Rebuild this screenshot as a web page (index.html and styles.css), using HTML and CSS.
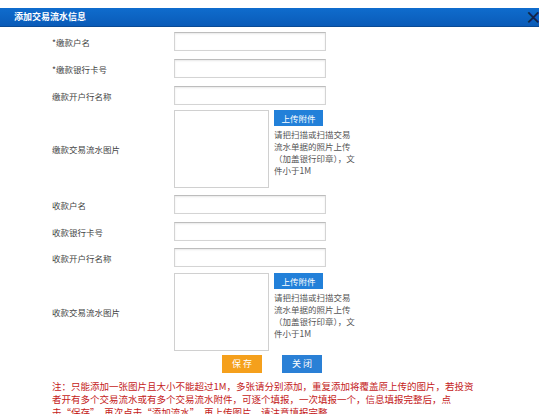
FILE: index.html
```html
<!DOCTYPE html>
<html lang="zh-CN">
<head>
  <meta charset="utf-8">
  <title>添加交易流水信息</title>
  <link rel="stylesheet" href="styles.css">
</head>
<body>
    <div class="title_bar">
        <span class="title">添加交易流水信息</span>
        <span class="close">×</span>
    </div>

    <div class="form">
        <div class="field">
            <div class="label">*缴款户名</div>
            <input class="text" type="text">
        </div>
        <div class="field">
            <div class="label">*缴款银行卡号</div>
            <input class="text" type="text">
        </div>
        <div class="field">
            <div class="label">缴款开户行名称</div>
            <input class="text" type="text">
        </div>
        <div class="field upload">
            <div class="label">缴款交易流水图片</div>
            <div class="pic"></div>
            <div class="side">
                <div class="up_btn">上传附件</div>
                <div class="hint">请把扫描或扫描交易流水单据的照片上传（加盖银行印章），文件小于1M</div>
            </div>
        </div>
        <div class="field after_upload">
            <div class="label">收款户名</div>
            <input class="text" type="text">
        </div>
        <div class="field">
            <div class="label">收款银行卡号</div>
            <input class="text" type="text">
        </div>
        <div class="field step7">
            <div class="label">收款开户行名称</div>
            <input class="text" type="text">
        </div>
        <div class="field upload second">
            <div class="label">收款交易流水图片</div>
            <div class="pic"></div>
            <div class="side">
                <div class="up_btn">上传附件</div>
                <div class="hint">请把扫描或扫描交易流水单据的照片上传（加盖银行印章），文件小于1M</div>
            </div>
        </div>

        <div class="actions">
            <div class="btn save">保 存</div>
            <div class="btn close_btn">关 闭</div>
        </div>

        <div class="note">注：只能添加一张图片且大小不能超过1M，多张请分别添加，重复添加将覆盖原上传的图片，若投资者开有多个交易流水或有多个交易流水附件，可逐个填报，一次填报一个，信息填报完整后，点<span class="nobr">击“保存”</span>，再次点击“添加流水”，再上传图片，请注意填报完整。</div>
    </div>
</body>
</html>
```

FILE: styles.css
```css
body{
    margin: 0;
    background-color: #fff;
    font-family: "Noto Sans CJK SC", "Liberation Sans", sans-serif;
    overflow: hidden;
}

.title_bar{
    margin-top: 8px;
    height: 18px;
    background: linear-gradient(#0f6ccd, #0a5bb8);
    border-bottom: 1px solid #0a4a94;
    display: flex;
    align-items: center;
    justify-content: space-between;
    padding-left: 14px;
}

.title_bar .title{
    color: #fff;
    font-size: 9px;
    font-weight: bold;
    line-height: 18px;
}

.title_bar .close{
    color: #14224a;
    font-size: 17px;
    font-weight: bold;
    line-height: 18px;
    margin-right: -3px;
}

.form{
    padding-top: 5px;
    padding-left: 52px;
}

.field{
    display: flex;
    align-items: center;
    margin-top: 8px;
}

.form .field:first-child{
    margin-top: 0;
}

.label{
    width: 122px;
    font-size: 8.5px;
    color: #444;
}

.text{
    box-sizing: border-box;
    width: 152px;
    height: 19px;
    margin: 0;
    border: 1px solid #d4d4d4;
    border-top-color: #bdbdbd;
    box-shadow: inset 0 1px 2px #e8e8e8;
    background: #fff;
}

.field.upload{
    margin-top: 5px;
    align-items: flex-start;
}

.field.upload .label{
    align-self: center;
}

.field.after_upload{
    margin-top: 7px;
}

.field.step7{
    margin-top: 7px;
}

.field.upload.second{
    margin-top: 6px;
}

.pic{
    box-sizing: border-box;
    width: 95px;
    height: 78px;
    border: 1px solid #d0d0d0;
    background: #fff;
}

.side{
    margin-left: 5px;
    width: 82px;
}

.up_btn{
    width: 49px;
    height: 16px;
    background-color: #2280d9;
    color: #fff;
    font-size: 8.5px;
    text-align: center;
    line-height: 16px;
}

.hint{
    margin-top: 2px;
    font-size: 8.5px;
    line-height: 12px;
    color: #555;
}

.actions{
    display: flex;
    gap: 20px;
    margin-top: 4px;
    margin-left: 170px;
}

.btn{
    width: 40px;
    height: 18px;
    color: #fff;
    font-size: 9px;
    text-align: center;
    line-height: 18px;
}

.btn.save{
    background-color: #f5a01c;
}

.btn.close_btn{
    background-color: #2a80d6;
}

.note{
    margin-top: 7px;
    width: 422px;
    font-size: 9.5px;
    line-height: 13px;
    color: #c41a1a;
}

.nobr{
    white-space: nowrap;
}
```
